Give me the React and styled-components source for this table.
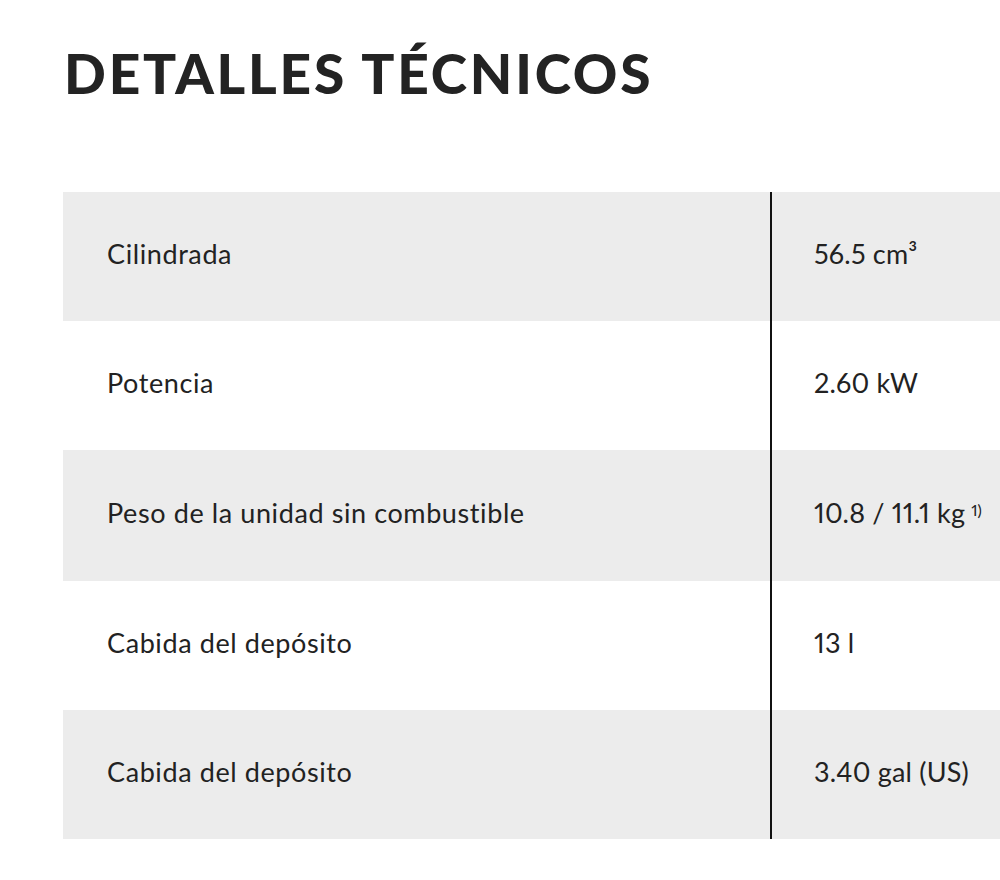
import React from "react";
import styled, { createGlobalStyle } from "styled-components";

const GlobalStyle = createGlobalStyle`
  html, body {
    margin: 0;
    padding: 0;
    background: #ffffff;
    overflow: hidden;
  }
`;

const Page = styled.div`
  width: 1000px;
  height: 880px;
  overflow: hidden;
  padding: 43px 0 0 63px;
  box-sizing: border-box;
  font-family: Lato, "Noto Sans", sans-serif;
  color: #222222;
`;

const Title = styled.h2`
  margin: 0 0 0 1px;
  font-family: Lato, sans-serif;
  font-weight: 900;
  font-size: 55px;
  line-height: 60px;
  letter-spacing: 2.8px;
  text-transform: uppercase;
  color: #232323;
`;

const Table = styled.div`
  margin-top: 89px;
  width: 980px;
  display: flex;
  flex-direction: column;
`;

const Row = styled.div`
  display: grid;
  grid-template-columns: 707px 1fr;
  height: ${(p) => p.$h || 129}px;
  background: ${(p) => (p.$shaded ? "#ececec" : "#ffffff")};
`;

const Cell = styled.div`
  display: flex;
  align-items: center;
  padding-bottom: 6px;
  box-sizing: border-box;
  font-size: 27px;
  font-weight: 400;
  letter-spacing: 0.6px;
  color: #222222;
  white-space: nowrap;
`;

const Label = styled(Cell)`
  padding-left: 44px;
`;

const Value = styled(Cell)`
  padding-left: 42px;
  border-left: 2px solid #111111;
  letter-spacing: 0.2px;
  font-variant-numeric: proportional-nums;
`;

const Note = styled.sup`
  align-self: flex-start;
  font-size: 16px;
  margin: 50px 0 0 6px;
  letter-spacing: 0;
`;

const specs = [
  { label: "Cilindrada", value: "56.5 cm³", h: 129 },
  { label: "Potencia", value: "2.60 kW", h: 129 },
  { label: "Peso de la unidad sin combustible", value: "10.8 / 11.1 kg", note: "1)", h: 131 },
  { label: "Cabida del depósito", value: "13 l", h: 129 },
  { label: "Cabida del depósito", value: "3.40 gal (US)", h: 129 },
];

export default function App() {
  return (
    <>
      <GlobalStyle />
      <Page>
        <Title>Detalles técnicos</Title>
        <Table>
          {specs.map((s, i) => (
            <Row key={i} $shaded={i % 2 === 0} $h={s.h}>
              <Label>{s.label}</Label>
              <Value>
                {s.value}
                {s.note && <Note>{s.note}</Note>}
              </Value>
            </Row>
          ))}
        </Table>
      </Page>
    </>
  );
}
